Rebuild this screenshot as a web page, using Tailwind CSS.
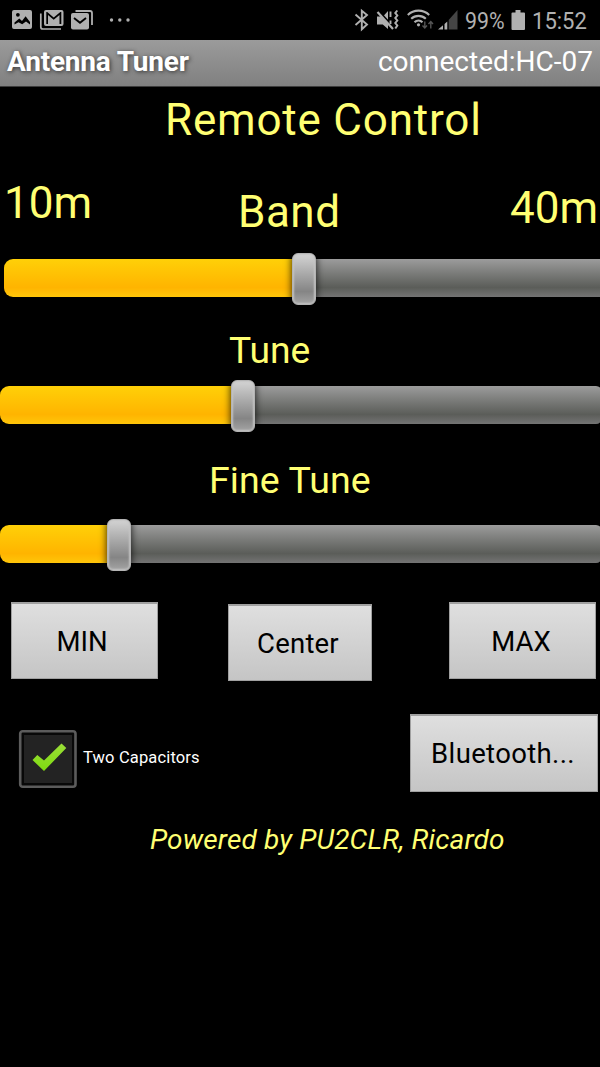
<!DOCTYPE html>
<html lang="en">
<head>
<meta charset="utf-8">
<title>Antenna Tuner</title>
<script src="https://cdn.jsdelivr.net/npm/@tailwindcss/browser@4"></script>
</head>
<body class="bg-black">
<div class="w-[600px] h-[1067px] bg-black overflow-hidden font-['Roboto',sans-serif] text-[#ffff73]">

  <!-- Status bar -->
  <header class="h-10 flex items-center justify-between text-[#b0b0b0]">
    <svg class="w-[140px] h-10" viewBox="0 0 140 40" fill="currentColor">
      <path fill-rule="evenodd" d="M14 10h16a2 2 0 0 1 2 2v15a2 2 0 0 1-2 2H14a2 2 0 0 1-2-2V12a2 2 0 0 1 2-2zM14.500 24.500V22.500L19.300 18.500L22 21L25.600 16.300L30 22V24.500L26 21.500L22.200 24.300L18.500 22.300zM16 14.800a1.900 1.900 0 1 0 3.800 0a1.900 1.900 0 1 0-3.800 0z"/>
      <path d="M40.800 13.500V27a2 2 0 0 0 2 2H61" fill="none" stroke="currentColor" stroke-width="1.700"/>
      <path fill-rule="evenodd" d="M46 10h15.500a2 2 0 0 1 2 2v12a2 2 0 0 1-2 2H46a2 2 0 0 1-2-2V12a2 2 0 0 1 2-2zM46.300 12V24H48V15L53.700 19.800L59.500 15V24H61.300V12H60.300L53.700 17.500L47.200 12z"/>
      <path d="M75.500 11H90a2 2 0 0 1 2 2V25" fill="none" stroke="currentColor" stroke-width="1.800"/>
      <path d="M73 13h14a2 2 0 0 1 2 2v12.500a2 2 0 0 1-2 2H73a2 2 0 0 1-2-2V15a2 2 0 0 1 2-2z"/>
      <path d="M74 18L80 22.800L86 18" fill="none" stroke="#000" stroke-width="1.900"/>
      <circle cx="111.500" cy="20" r="1.700"/><circle cx="119.800" cy="20" r="1.700"/><circle cx="128" cy="20" r="1.700"/>
    </svg>
    <div class="flex items-center h-10 w-[250px]">
      <svg class="w-[112px] h-10 shrink-0" viewBox="350 0 112 40" fill="currentColor">
        <path d="M355.500 14.500L367 24.500L361.800 29.300V10.700L367 15L355.500 25" fill="none" stroke="currentColor" stroke-width="1.900"/>
        <path d="M377 16.500h6L388 11V29L382.800 24.500H377z"/>
        <path d="M377.500 10L394 28" stroke="#000" stroke-width="2.500"/>
        <path d="M377.500 12L393 29" stroke="currentColor" stroke-width="2.200"/>
        <path d="M390.500 11.500V17M390.500 20.500V24" stroke="currentColor" stroke-width="1.900"/>
        <path d="M397.300 10.500L395.300 13L397.300 15.500L395.300 18L397.300 20.500L395.300 23L397.300 25.500L395.300 28.500" fill="none" stroke="currentColor" stroke-width="2"/>
        <path d="M407.800 14.900A15.500 15.500 0 0 1 429.200 14.900M411.200 18.800A10.500 10.500 0 0 1 425.800 18.800M414.500 22.200A5.800 5.800 0 0 1 422.500 22.200" fill="none" stroke="currentColor" stroke-width="2.100"/>
        <circle cx="418.500" cy="24.800" r="1.600"/>
        <path d="M424.800 21.500V28M422.500 25.500L424.800 28L427 25.500M430.800 28.500V21.800M428.500 24L430.800 21.500L433 24" fill="none" stroke="#555" stroke-width="1.400"/>
        <path d="M438 29.500L443 25.300V29.500zM444.500 24L447.300 21.500V29.500h-2.800z"/>
        <path d="M448.700 20L457.500 10V29.500h-8.800z" fill="#454545"/>
      </svg>
      <div class="w-[48px] shrink-0 text-[24.500px] leading-10 pt-[2px] pl-[3px]"><span class="inline-block origin-left scale-x-[.87]">99%</span></div>
      <svg class="w-[20px] h-10 shrink-0" viewBox="510 0 20 40" fill="currentColor"><path d="M515.500 10h5v2.500h3.500a1 1 0 0 1 1 1V29a1 1 0 0 1-1 1H512.500a1 1 0 0 1-1-1V13.500a1 1 0 0 1 1-1h3z"/></svg>
      <div class="w-[70px] shrink-0 text-[24.500px] leading-10 pt-[2px] pl-[2px]"><span class="inline-block origin-left scale-x-[.9]">15:52</span></div>
    </div>
  </header>

  <!-- Title bar -->
  <div class="h-[47px] flex justify-between pl-[7px] pr-[7px] bg-linear-to-b from-[#9b9b9b] to-[#808080] border-b border-[#3c3c3c] text-white text-[28px] leading-[44px] whitespace-nowrap">
    <h1 class="font-bold tracking-[-0.2px] [text-shadow:1px_1px_4px_#333]">Antenna Tuner</h1>
    <span>connected:HC-07</span>
  </div>

  <main>
    <h2 class="mt-[3px] h-[60px] pl-[165px] text-[44px] leading-[60px] tracking-[0.800px] whitespace-nowrap">Remote Control</h2>

    <div class="h-[103px] flex justify-between text-[44px] leading-[60px] whitespace-nowrap">
      <span class="w-[150px] pl-[4px] pt-[23px]">10m</span>
      <span class="w-[200px] pl-[38px] pt-[32px] tracking-[0.500px]">Band</span>
      <span class="w-[150px] pt-[28px] pr-0.5 text-right">40m</span>
    </div>

    <div class="h-[52px] pl-[3.500px] flex items-start">
      <div class="mt-[6px] h-[38px] w-[300.500px] shrink-0 rounded-l-[9px] bg-linear-to-b from-[#ffd008] via-[#ffb400] via-75% to-[#ffc60a]"></div>
      <div class="relative z-10 -mx-3 w-[24px] h-[52px] shrink-0 rounded-[6px] border border-[#b4b4b4] bg-linear-to-b from-[#d4d4d4] via-[#858585] via-75% to-[#a4a4a4] shadow-[0_0_7px_1px_#000a,inset_0_0_2px_1px_#c4c4c4]"></div>
      <div class="mt-[6px] h-[38px] w-[310px] shrink-0 bg-linear-to-b from-[#9c9c9c] via-[#5b5d59] via-75% to-[#747474]"></div>
    </div>

    <h3 class="mt-[20px] h-[50px] pl-[229px] text-[37.200px] leading-[50px] whitespace-nowrap">Tune</h3>
    <div class="mt-[5px] h-[52px] flex items-start">
      <div class="mt-[6px] h-[38px] w-[243px] shrink-0 rounded-l-[9px] bg-linear-to-b from-[#ffd008] via-[#ffb400] via-75% to-[#ffc60a]"></div>
      <div class="relative z-10 -mx-3 w-[24px] h-[52px] shrink-0 rounded-[6px] border border-[#b4b4b4] bg-linear-to-b from-[#d4d4d4] via-[#858585] via-75% to-[#a4a4a4] shadow-[0_0_7px_1px_#000a,inset_0_0_2px_1px_#c4c4c4]"></div>
      <div class="mt-[6px] h-[38px] w-[359px] shrink-0 rounded-r-[6px] bg-linear-to-b from-[#9c9c9c] via-[#5b5d59] via-75% to-[#747474]"></div>
    </div>

    <h3 class="mt-[23px] h-[50px] pl-[209px] text-[37.500px] leading-[50px] tracking-[0.100px] whitespace-nowrap">Fine Tune</h3>
    <div class="mt-[14px] h-[52px] flex items-start">
      <div class="mt-[6px] h-[38px] w-[119px] shrink-0 rounded-l-[9px] bg-linear-to-b from-[#ffd008] via-[#ffb400] via-75% to-[#ffc60a]"></div>
      <div class="relative z-10 -mx-3 w-[24px] h-[52px] shrink-0 rounded-[6px] border border-[#b4b4b4] bg-linear-to-b from-[#d4d4d4] via-[#858585] via-75% to-[#a4a4a4] shadow-[0_0_7px_1px_#000a,inset_0_0_2px_1px_#c4c4c4]"></div>
      <div class="mt-[6px] h-[38px] w-[483px] shrink-0 rounded-r-[6px] bg-linear-to-b from-[#9c9c9c] via-[#5b5d59] via-75% to-[#747474]"></div>
    </div>

    <div class="mt-[31px] h-[79px] pl-[11px] pr-[4px] flex justify-between text-black text-[27.500px] leading-[74px]">
      <button class="w-[147px] h-[77px] pt-[1px] pr-[5px] bg-linear-to-b from-[#dfdfdf] to-[#c5c5c5] border border-t-2 border-[#a0a0a0]">MIN</button>
      <button class="w-[144px] h-[77px] mt-[2px] mr-[7px] pt-[1px] pr-[4px] tracking-[0.200px] bg-linear-to-b from-[#dfdfdf] to-[#c5c5c5] border border-t-2 border-[#a0a0a0]">Center</button>
      <button class="w-[147px] h-[77px] pt-[1px] pr-[3px] bg-linear-to-b from-[#dfdfdf] to-[#c5c5c5] border border-t-2 border-[#a0a0a0]">MAX</button>
    </div>

    <div class="mt-[33px] h-[78px] pl-[18px] pr-[2px] flex justify-between">
      <label class="flex items-center h-[58px] mt-[16px] text-white text-[16.500px] tracking-[0.150px] whitespace-nowrap">
        <svg class="w-[60px] h-[58px]" viewBox="0 0 60 58">
          <defs><linearGradient id="tick" x1="0" y1="0" x2="0" y2="1"><stop stop-color="#9ade38"/><stop offset="1" stop-color="#7fdb10"/></linearGradient></defs>
          <rect x="2.200" y="1.300" width="55.300" height="55.400" rx="2.500" fill="#080808" stroke="#5c5c5c" stroke-width="2.600"/>
          <rect x="6" y="5" width="48" height="48" fill="#232323"/>
          <path d="M14.500 30L19.300 25L26 30.500L43.500 13.500L48.300 18L26 41z" fill="url(#tick)"/>
        </svg>
        <span class="pl-[5px] pb-[2px] leading-[56px]">Two Capacitors</span>
      </label>
      <button class="w-[188px] h-[78px] pt-[1px] pr-[2px] text-black text-[27.500px] leading-[74px] tracking-[0.350px] bg-linear-to-b from-[#dfdfdf] to-[#c5c5c5] border border-t-2 border-[#a0a0a0]">Bluetooth...</button>
    </div>

    <p class="mt-[28px] h-10 pl-[150px] text-[28px] leading-10 italic tracking-[0.140px] whitespace-nowrap">Powered by PU2CLR, Ricardo</p>
  </main>
</div>
</body>
</html>
